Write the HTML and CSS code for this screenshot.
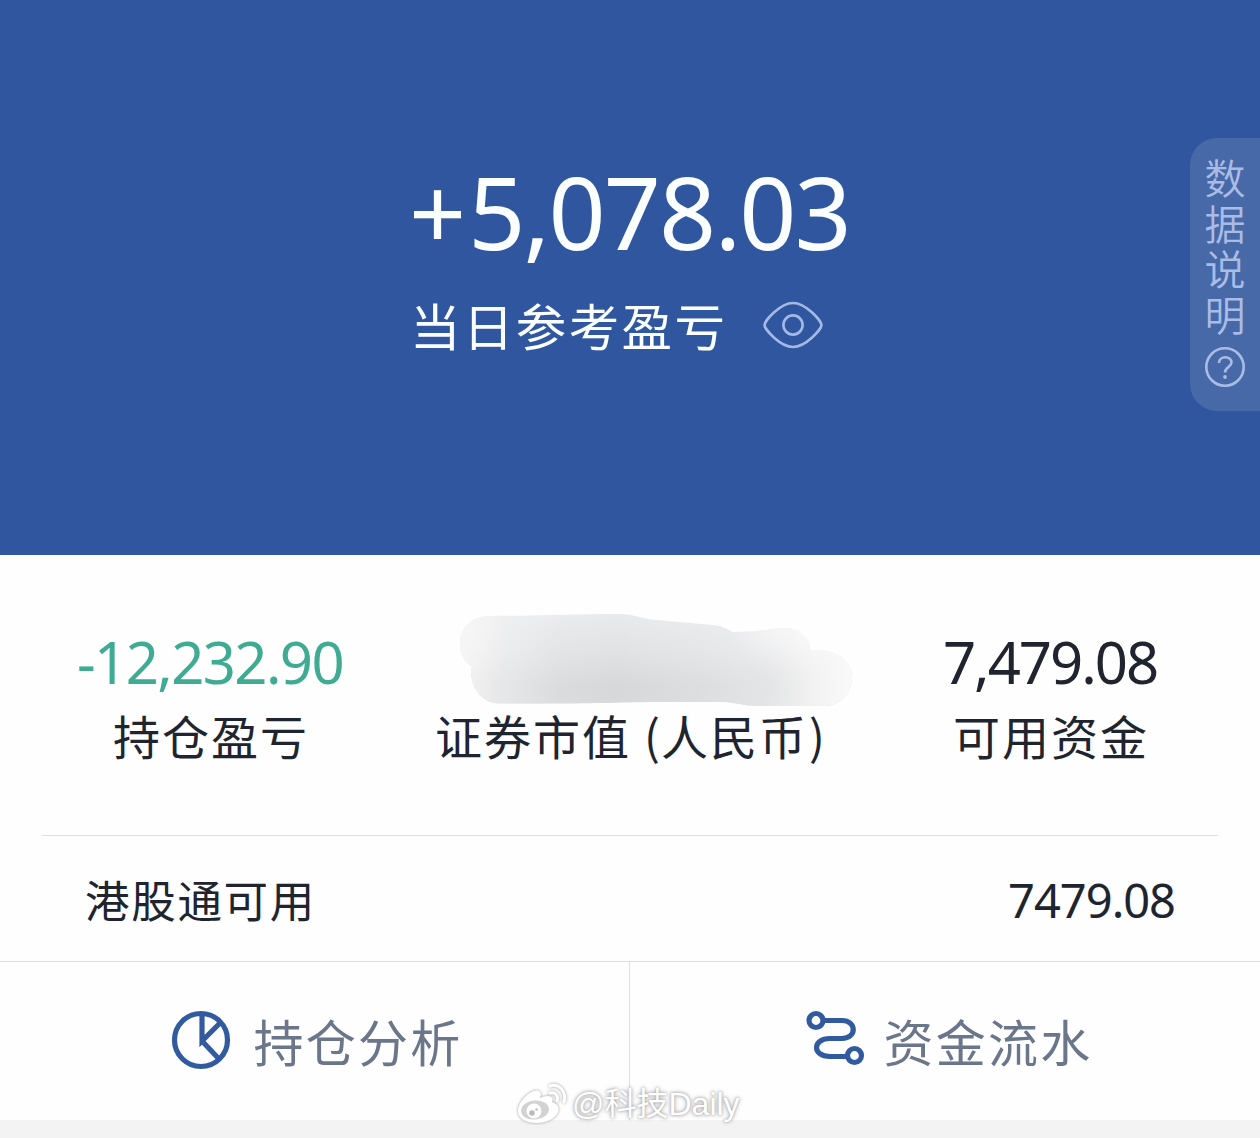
FILE: index.html
```
<!DOCTYPE html>
<html lang="zh-CN">
<head>
<meta charset="utf-8">
<title>持仓</title>
<link rel="stylesheet" href="styles.css">
</head>
<body>
<main class="page">
  <header class="hero">
    <div class="hero-body">
      <div class="hero-value"><span class="sign">+</span>5,078.03</div>
      <div class="hero-caption">
        <span class="hero-label">当日参考盈亏</span>
        <svg class="eye" width="60" height="48" viewBox="0 0 60 48"><path d="M1.500 24C1.500 20 17 2 30 2S58.500 20 58.500 24S43 46 30 46S1.500 28 1.500 24Z"/><circle cx="30" cy="24" r="9.600"/></svg>
      </div>
    </div>
    <aside class="side-tab">
      <span>数</span><span>据</span><span>说</span><span>明</span>
      <svg class="help" width="40" height="40" viewBox="0 0 40 40"><circle cx="20" cy="20" r="18.700"/><path d="M14 16C14 8.500 26.500 8.500 26.500 15.500C26.500 20 20 20 20 25.500"/><circle class="dot" cx="20" cy="30" r="1.900"/></svg>
    </aside>
  </header>

  <section class="stats">
    <div class="stat">
      <div class="stat-value loss">-12,232.90</div>
      <div class="stat-label">持仓盈亏</div>
    </div>
    <div class="stat">
      <div class="stat-value">
        <svg class="smudge" width="396" height="96" viewBox="0 0 396 96">
          <defs>
            <clipPath id="brush"><path d="M30 3C75 3 115 1 161 1C175 1 183 6 198 7L253 12Q266 13 273 19L294 18.500C308 17 316 15 326 15C341 15 351 27 352 37C371 36 393 43 393 65C393 81 380 93 366 93L300 93C282 93 278 89 260 89L190 89C145 90 110 91 40 90.500C23 90 11 76 12 53C4 47 1 39 1 29C2 13 15 3 30 3Z"/></clipPath>
            <linearGradient id="tone" x1="0" y1="0" x2="0" y2="1"><stop offset="0" stop-color="#e9eaec"/><stop offset=".4" stop-color="#e1e2e4"/><stop offset=".75" stop-color="#d7d8da"/><stop offset="1" stop-color="#d8d9db"/></linearGradient>
            <linearGradient id="fade" x1="0" y1="0" x2="1" y2="0"><stop offset="0" stop-color="#f5f5f5"/><stop offset=".1" stop-color="#f7f7f7" stop-opacity=".5"/><stop offset=".25" stop-color="#fbfbfb" stop-opacity=".1"/><stop offset=".4" stop-color="#fbfbfb" stop-opacity="0"/><stop offset=".6" stop-color="#fbfbfb" stop-opacity=".15"/><stop offset=".78" stop-color="#fbfbfb" stop-opacity=".35"/><stop offset=".9" stop-color="#fbfbfb" stop-opacity=".75"/><stop offset="1" stop-color="#fafafa"/></linearGradient>
            <filter id="soft" x="-50%" y="-100%" width="200%" height="300%"><feGaussianBlur stdDeviation="15"/></filter>
          </defs>
          <g clip-path="url(#brush)">
            <rect width="396" height="96" fill="url(#tone)"/>
            <rect width="396" height="96" fill="url(#fade)"/>
            <ellipse cx="340" cy="18" rx="55" ry="18" fill="#fcfcfc" opacity=".6" filter="url(#soft)"/>
            <ellipse cx="15" cy="25" rx="22" ry="22" fill="#fbfbfb" opacity=".4" filter="url(#soft)"/>
          </g>
        </svg>
      </div>
      <div class="stat-label">证券市值<span class="paren-open">(</span>人民币<span class="paren-close">)</span></div>
    </div>
    <div class="stat">
      <div class="stat-value available">7,479.08</div>
      <div class="stat-label">可用资金</div>
    </div>
  </section>

  <section class="row">
    <span class="row-label">港股通可用</span>
    <span class="row-value">7479.08</span>
  </section>

  <nav class="actions">
    <a class="action">
      <svg class="icon" width="60" height="60" viewBox="0 0 60 60"><circle cx="30" cy="30" r="26.500"/><path d="M31 4V31L49 13M31 31L48 49"/></svg>
      <span>持仓分析</span>
    </a>
    <a class="action flow">
      <svg class="icon" width="60" height="60" viewBox="0 0 60 60"><circle cx="11" cy="10.500" r="7"/><circle cx="49.500" cy="45.500" r="7"/><path d="M18 10.500H37C52 10.500 52 28.500 37 28.500H25C7 28.500 7 46.500 25 46.500H42.500"/></svg>
      <span>资金流水</span>
    </a>
  </nav>
  <div class="page-end"></div>

  <div class="watermark">
    <svg width="52" height="44" viewBox="0 0 52 44"><path d="M2 29C2 19 16 6 23 9C26 11 25 14 24 16C31 13 38 13 36 20C47 24 43 33 34 38C22 44 2 41 2 29Z" fill="#fff"/><ellipse cx="19" cy="28" rx="14" ry="9.500" fill="#d2d2d2" transform="rotate(-6 19 28)"/><circle cx="18" cy="29" r="7.500" fill="#fff"/><circle cx="16" cy="31" r="2.800" fill="#bbb"/><circle cx="20.500" cy="27.500" r="1.200" fill="#bbb"/><path d="M34 11C39 10 43 14 41 19M34 4C43 1 51 10 48 20" fill="none" stroke="#fff" stroke-width="3" stroke-linecap="round"/></svg>
    <span>@科技Daily</span>
  </div>
</main>
</body>
</html>
```
FILE: styles.css
```
* { box-sizing: border-box; }
body { margin: 0; font-family: "Noto Sans CJK SC", sans-serif; color: #20242f; background: #fefefe; }
.page { position: relative; width: 1260px; height: 1138px; overflow: hidden; display: flex; flex-direction: column; }

.hero { position: relative; height: 555px; background: #2f569e; color: #fbfeff; padding: 151px 0 0 409px; }
.hero-value { height: 120px; line-height: 120px; font-family: "Noto Sans", sans-serif; font-size: 100px; letter-spacing: -1.9px; white-space: nowrap; }
.sign { margin-right: 4px; }
.hero-caption { display: flex; align-items: center; gap: 36px; height: 100px; margin-top: 4px; padding-left: 1px; }
.hero-label { font-size: 50.500px; letter-spacing: 2.400px; line-height: 98px; height: 100px; }
.eye { fill: none; stroke: #a5b9e6; stroke-width: 2.600; }

.side-tab { position: absolute; right: 0; top: 138px; width: 70px; height: 273px; padding-top: 16px; border-radius: 27px 0 0 27px; background: #4769a8; color: #aabce6; display: flex; flex-direction: column; align-items: center; font-size: 41px; line-height: 45.700px; }
.side-tab span { height: 45.700px; font-weight: 350; }
.help { margin-top: 10px; fill: none; stroke: #aabce6; stroke-width: 2.600; }
.help .dot { fill: #aabce6; stroke: none; }

.stats { display: grid; grid-template-columns: repeat(3, 420px); height: 280px; padding-top: 58px; }
.stat { display: flex; flex-direction: column; align-items: center; }
.stat-value { height: 87px; line-height: 98px; font-family: "Noto Sans", sans-serif; font-size: 58px; letter-spacing: -2px; white-space: nowrap; }
.loss { color: #3fab92; letter-spacing: -1.600px; }
.smudge { display: block; margin-left: 54px; }
.stat-label { height: 70px; line-height: 69px; font-size: 47px; letter-spacing: 2px; padding-left: 2px; white-space: nowrap; }
.paren-open { margin: 0 -1px 0 13px; }
.paren-close { margin-left: 1px; }

.row { display: flex; justify-content: space-between; align-items: center; height: 126px; margin: 0 42px; padding: 0 43px 0 43px; border-top: 1px solid #dedede; }
.row-label { font-size: 44.500px; letter-spacing: 1.700px; }
.row-value { font-family: "Noto Sans", sans-serif; font-size: 47px; letter-spacing: -1px; padding-top: 2px; }

.actions { display: grid; grid-template-columns: 630px 630px; height: 159px; border-top: 1px solid #dedede; }
.action { display: flex; justify-content: center; align-items: center; gap: 22px; padding: 0 0 3px 5px; color: #6b768b; font-size: 50px; letter-spacing: 2.300px; }
.action:first-child { border-right: 1px solid #dedede; }
.flow { gap: 18px; padding-left: 8px; }
.icon { fill: none; stroke: #315a9f; stroke-width: 5.200; }
.page-end { height: 18px; background: #f3f3f3; }

.watermark { position: absolute; left: 516px; top: 1081px; display: flex; align-items: center; gap: 4px; height: 46px; color: #fff; font: 32px/46px "Liberation Sans", "Noto Sans CJK SC", sans-serif; text-shadow: 0 0 3px #999, 0 0 5px #bbb; white-space: nowrap; }
.watermark svg { filter: drop-shadow(0 0 1.500px #999); }
```
